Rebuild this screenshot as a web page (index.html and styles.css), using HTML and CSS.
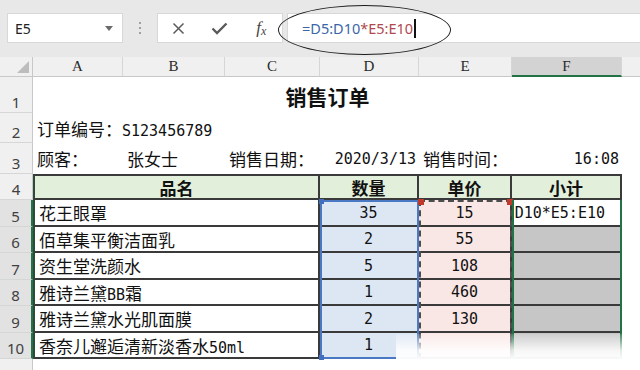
FILE: index.html
```html
<!DOCTYPE html>
<html lang="zh-CN">
<head>
    <meta charset="UTF-8">
    <title>销售订单</title>
    <link rel="stylesheet" href="styles.css">
</head>
<body>
    <div class="toolbar">
        <div class="namebox"><span>E5</span><span class="arrow"></span></div>
        <div class="grip"><i></i><i></i><i></i></div>
        <div class="fxbtns">
            <span class="btn"><svg width="13" height="13" viewBox="0 0 13 13"><path d="M1.5 1.5 L11.5 11.5 M11.5 1.5 L1.5 11.5" stroke="#5a5a5a" stroke-width="1.5" fill="none"/></svg></span>
            <span class="btn"><svg width="17" height="13" viewBox="0 0 17 13"><path d="M1.5 6.5 L6 11 L15.5 1.5" stroke="#5a5a5a" stroke-width="2.4" fill="none"/></svg></span>
            <span class="btn fx"><i>f</i><i class="sub">x</i></span>
        </div>
        <div class="formula">
            <span class="ref-d">=D5:D10</span><span class="ref-e">*E5:E10</span><span class="cursor"></span>
        </div>
        <div class="ellipse"></div>
    </div>

    <div class="sheet">
        <!-- column headers -->
        <div class="corner"><span class="tri"></span></div>
        <div class="ch">A</div>
        <div class="ch">B</div>
        <div class="ch">C</div>
        <div class="ch">D</div>
        <div class="ch">E</div>
        <div class="ch active">F</div>
        <div class="ch last"></div>

        <!-- row 1 -->
        <div class="rh">1</div>
        <div class="c title">销售订单</div>
        <div class="c"></div>

        <!-- row 2 -->
        <div class="rh">2</div>
        <div class="c span-a-d"><span>订单编号：<span class="num">S123456789</span></span></div>
        <div class="c"></div>
        <div class="c"></div>
        <div class="c"></div>

        <!-- row 3 -->
        <div class="rh">3</div>
        <div class="c">顾客：</div>
        <div class="c">张女士</div>
        <div class="c">销售日期：</div>
        <div class="c right"><span class="num">2020/3/13</span></div>
        <div class="c">销售时间：</div>
        <div class="c right"><span class="num">16:08</span></div>
        <div class="c"></div>

        <!-- row 4 -->
        <div class="rh">4</div>
        <div class="t th first name">品名</div>
        <div class="t th">数量</div>
        <div class="t th">单价</div>
        <div class="t th">小计</div>
        <div class="c"></div>

        <!-- rows 5-10 -->
        <div class="rh active r5">5</div>
        <div class="t first name r5">花王眼罩</div>
        <div class="t qty r5"><span class="num">35</span></div>
        <div class="t price r5"><span class="num">15</span></div>
        <div class="t sum edit r5"><span class="num">=D5:D10*E5:E10</span></div>

        <div class="rh active r6">6</div>
        <div class="t first name r6">佰草集平衡洁面乳</div>
        <div class="t qty r6"><span class="num">2</span></div>
        <div class="t price r6"><span class="num">55</span></div>
        <div class="t sum r6"></div>

        <div class="rh active r7">7</div>
        <div class="t first name r7">资生堂洗颜水</div>
        <div class="t qty r7"><span class="num">5</span></div>
        <div class="t price r7"><span class="num">108</span></div>
        <div class="t sum r7"></div>

        <div class="rh active r8">8</div>
        <div class="t first name r8"><span>雅诗兰黛<span class="num">BB</span>霜</span></div>
        <div class="t qty r8"><span class="num">1</span></div>
        <div class="t price r8"><span class="num">460</span></div>
        <div class="t sum r8"></div>

        <div class="rh active r9">9</div>
        <div class="t first name r9">雅诗兰黛水光肌面膜</div>
        <div class="t qty r9"><span class="num">2</span></div>
        <div class="t price r9"><span class="num">130</span></div>
        <div class="t sum r9"></div>

        <div class="rh active r10">10</div>
        <div class="t first name r10"><span>香奈儿邂逅清新淡香水<span class="num">50ml</span></span></div>
        <div class="t qty r10"><span class="num">1</span></div>
        <div class="t price r10"></div>
        <div class="t sum r10"></div>

        <!-- row 11 -->
        <div class="rh r11">11</div>

        <!-- reference highlights drawn over the cells -->
        <div class="rng rng-d"></div>
        <div class="rng rng-e"></div>
        <div class="rng rng-f"></div>
    </div>

    <div class="fade"></div>
</body>
</html>
```

FILE: styles.css
```css
* {
    box-sizing: border-box;
}

body {
    margin: 0;
    width: 640px;
    height: 370px;
    overflow: hidden;
    background: #fff;
    font-family: "Noto Sans CJK SC", sans-serif;
    color: #111;
    position: relative;
}

/* formula bar */
.toolbar {
    height: 57px;
    background: #e8e8e8;
    display: flex;
    align-items: flex-start;
    padding: 13px 0 0 7px;
    position: relative;
}

.namebox {
    width: 116px;
    height: 30px;
    background: #fff;
    border: 1px solid #d8d8d8;
    display: flex;
    align-items: center;
    justify-content: space-between;
    padding: 0 9px 0 7px;
    font-family: "Noto Sans", sans-serif;
    font-size: 14px;
    color: #222;
}

.namebox .arrow {
    width: 0;
    height: 0;
    border-left: 4px solid transparent;
    border-right: 4px solid transparent;
    border-top: 5px solid #6a6a6a;
}

.grip {
    width: 34px;
    height: 30px;
    display: flex;
    flex-direction: column;
    align-items: center;
    justify-content: center;
    gap: 3px;
}

.grip i {
    width: 2px;
    height: 2px;
    background: #a0a0a0;
}

.fxbtns {
    width: 126px;
    height: 30px;
    background: #fff;
    border: 1px solid #d8d8d8;
    display: flex;
    align-items: center;
}

.fxbtns .btn {
    width: 42px;
    display: flex;
    justify-content: center;
    align-items: center;
}

.fx {
    font-family: "Liberation Serif", serif;
    font-style: italic;
    color: #444;
    font-size: 17px;
}

.fx i {
    font-style: italic;
}

.fx .sub {
    font-size: 12px;
    margin-top: 6px;
}

.formula {
    flex: 1;
    margin-left: 4px;
    height: 30px;
    background: #fff;
    border: 1px solid #d8d8d8;
    border-right: none;
    display: flex;
    align-items: center;
    padding-left: 14px;
    font-family: "Noto Sans", sans-serif;
    font-size: 14.5px;
}

.ref-d {
    color: #3a66a8;
}

.ref-e {
    color: #b0484e;
}

.cursor {
    width: 1.5px;
    height: 19px;
    background: #111;
    margin-left: 1px;
}

.ellipse {
    position: absolute;
    left: 278px;
    top: 5px;
    width: 173px;
    height: 50px;
    border: 1.5px solid #1c1c1c;
    border-radius: 50%;
}

/* sheet grid */
.sheet {
    display: grid;
    grid-template-columns: 33px 90px 102px 95px 99px 93px 110px 18px;
    grid-template-rows: 20px 36px 30px 31px 26px 27px 26px 27px 26px 27px 26px 30px;
}

.corner {
    background: #f0f0f0;
    border-right: 1px solid #c8c8c8;
    border-bottom: 1px solid #c8c8c8;
    display: flex;
    align-items: flex-end;
    justify-content: flex-end;
    padding: 0 3px 3px 0;
}

.corner .tri {
    width: 0;
    height: 0;
    border-left: 12px solid transparent;
    border-bottom: 12px solid #bdbdbd;
}

.ch {
    background: #f0f0f0;
    border-right: 1px solid #d6d6d6;
    border-bottom: 1px solid #c8c8c8;
    display: flex;
    align-items: center;
    justify-content: center;
    font-family: "Liberation Serif", serif;
    font-size: 15px;
    color: #2a2a2a;
}

.ch.active {
    background: #d3d3d3;
    border-bottom: 2px solid #217346;
}

.ch.last {
    border-right: none;
}

.rh {
    grid-column: 1;
    background: #f0f0f0;
    border-right: 1px solid #c8c8c8;
    border-bottom: 1px solid #d6d6d6;
    display: flex;
    align-items: flex-end;
    justify-content: center;
    font-family: "Noto Sans", sans-serif;
    font-size: 15px;
    line-height: 19px;
    color: #404040;
}

.rh.active {
    background: #e2e2e2;
    border-right: 2px solid #217346;
}

/* explicit rows for the order lines, so the range outlines can overlap them */
.r5 { grid-row: 6; }
.r6 { grid-row: 7; }
.r7 { grid-row: 8; }
.r8 { grid-row: 9; }
.r9 { grid-row: 10; }
.r10 { grid-row: 11; }
.r11 { grid-row: 12; }

.c,
.t {
    display: flex;
    align-items: center;
    padding: 0 4px;
    font-size: 17px;
    white-space: nowrap;
    overflow: hidden;
}

.right {
    justify-content: flex-end;
    padding-right: 3px;
}

.num {
    font-family: "DejaVu Sans Mono", monospace;
    font-size: 15px;
}

.title {
    grid-column: 2 / 8;
    justify-content: center;
    font-size: 21px;
    font-weight: 700;
    padding-top: 2px;
}

.span-a-d {
    grid-column: 2 / 5;
}

/* order table */
.t {
    border-right: 2px solid #3a3a3a;
    border-bottom: 2px solid #3a3a3a;
    justify-content: center;
}

.t.first {
    border-left: 2px solid #2f4a3c;
}

.t.name {
    grid-column: 2 / 5;
    justify-content: flex-start;
}

.th {
    background: #e2efda;
    border-top: 2px solid #3a3a3a;
    font-weight: 700;
}

.th.name {
    justify-content: center;
}

.qty {
    grid-column: 5;
    background: #dde7f4;
}

.price {
    grid-column: 6;
    background: #f9e7e5;
}

.sum {
    grid-column: 7;
    background: #c6c6c6;
}

.sum.edit {
    background: #fff;
    justify-content: flex-end;
    padding-right: 15px;
}

/* range outlines */
.rng {
    grid-row: 6 / 12;
    position: relative;
    z-index: 2;
}

.rng-d {
    grid-column: 5;
    border: 2px solid #4a78c2;
}

.rng-d::before,
.rng-d::after {
    content: "";
    position: absolute;
    left: -3px;
    width: 5px;
    height: 5px;
    background: #3f6fbe;
}

.rng-d::before {
    top: -3px;
}

.rng-d::after {
    bottom: -3px;
}

.rng-e {
    grid-column: 6;
    border: 2px dashed #4d4d4d;
    border-bottom: none;
}

.rng-e::before,
.rng-e::after {
    content: "";
    position: absolute;
    top: -3px;
    width: 6px;
    height: 6px;
    background: #c0392b;
}

.rng-e::before {
    left: -3px;
}

.rng-e::after {
    right: -3px;
}

.rng-f {
    grid-column: 7;
    border-left: 2px solid #217346;
    border-right: 2px solid #217346;
}

/* faded corner of the photo */
.fade {
    position: absolute;
    left: 396px;
    top: 334px;
    width: 244px;
    height: 36px;
    background: linear-gradient(to bottom, rgba(255, 255, 255, 0.15), rgba(255, 255, 255, 0.85) 45%, #fff 75%);
    z-index: 5;
}
```
